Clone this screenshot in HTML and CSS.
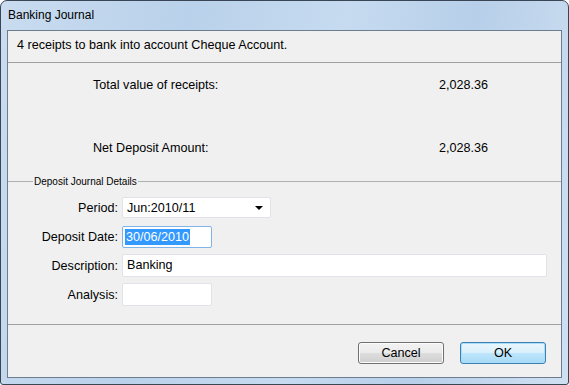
FILE: index.html
```html
<!DOCTYPE html>
<html lang="en">
<head>
    <meta charset="UTF-8">
    <title>Banking Journal</title>
    <link rel="stylesheet" href="styles.css">
</head>
<body>
    <div class="window">
        <div class="titlebar">Banking Journal</div>
        <div class="client">
            <div class="message">4 receipts to bank into account Cheque Account.</div>
            <div class="summary">
                <div class="sum-row">
                    <span class="sum-label">Total value of receipts:</span>
                    <span class="sum-value">2,028.36</span>
                </div>
                <div class="sum-row">
                    <span class="sum-label">Net Deposit Amount:</span>
                    <span class="sum-value">2,028.36</span>
                </div>
            </div>
            <div class="group-title"><span>Deposit Journal Details</span></div>
            <div class="form">
                <label>Period:</label>
                <div class="combo">Jun:2010/11<span class="arrow"></span></div>
                <label>Deposit Date:</label>
                <div class="field short focused"><span class="selected">30/06/2010</span></div>
                <label>Description:</label>
                <div class="field wide tall">Banking</div>
                <label>Analysis:</label>
                <div class="field short tall"></div>
            </div>
            <div class="buttons">
                <button type="button" class="btn">Cancel</button>
                <button type="button" class="btn default">OK</button>
            </div>
        </div>
    </div>
</body>
</html>
```

FILE: styles.css
```css
body {
    margin: 0;
    font-family: 'Liberation Sans', Arial, sans-serif;
    font-size: 12.6px;
    color: #000;
    background: #fff;
}
.window {
    width: 569px;
    height: 385px;
    box-sizing: border-box;
    border: 1px solid #3a4656;
    border-radius: 7px 7px 3px 3px;
    background: linear-gradient(100deg, #c9dcf0 0%, #b9d1ea 30%, #c6dbf0 55%, #b7cfe9 75%, #cfe0f2 100%);
    padding: 0 6px 6px 6px;
    display: flex;
    flex-direction: column;
}
.titlebar {
    height: 29px;
    line-height: 29px;
    padding-left: 1px;
    font-size: 12px;
    color: #000;
}
.client {
    flex: 1;
    background: #f0f0f0;
    border: 1px solid #6d7c8f;
    display: flex;
    flex-direction: column;
}
.message {
    height: 31px;
    line-height: 29px;
    padding-left: 9px;
    border-bottom: 1px solid #a0a0a0;
}
.summary {
    padding: 15px 0 0 85px;
    height: 111px;
    box-sizing: border-box;
    display: flex;
    flex-direction: column;
    gap: 49px;
}
.sum-row {
    display: flex;
    width: 395px;
    justify-content: space-between;
    line-height: 14px;
}
.group-title {
    display: flex;
    align-items: center;
    height: 14px;
}
.group-title::before {
    content: '';
    width: 25px;
    border-top: 1px solid #b0b0b0;
}
.group-title::after {
    content: '';
    flex: 1;
    border-top: 1px solid #b0b0b0;
}
.group-title span {
    padding: 0 1px;
    font-size: 10px;
}
.form {
    display: grid;
    grid-template-columns: 110px auto;
    grid-template-rows: repeat(4, 29px);
    align-content: start;
    column-gap: 4px;
    align-items: center;
    justify-items: start;
    padding: 5px 0 15px;
    border-bottom: 1px solid #a0a0a0;
}
.form label {
    justify-self: end;
}
.field, .combo {
    box-sizing: border-box;
    height: 22px;
    background: #fff;
    border: 1px solid #e2e3ea;
    border-radius: 2px;
    padding-left: 4px;
    line-height: 20px;
}
.combo {
    width: 149px;
    height: 21px;
    position: relative;
}
.arrow {
    position: absolute;
    right: 7px;
    top: 8px;
    border-left: 4px solid transparent;
    border-right: 4px solid transparent;
    border-top: 4px solid #000;
}
.short {
    width: 90px;
}
.wide {
    width: 425px;
}
.tall {
    height: 23px;
    line-height: 21px;
}
.focused {
    border-color: #7eb4ea;
    padding-left: 2px;
}
.selected {
    background: #3399ff;
    color: #fff;
    padding: 1px 1px;
}
.buttons {
    flex: 1;
    display: flex;
    justify-content: flex-end;
    align-items: flex-start;
    gap: 16px;
    padding: 17px 15px 0 0;
}
.btn {
    width: 86px;
    height: 22px;
    font-family: inherit;
    font-size: 12.6px;
    border: 1px solid #707070;
    border-radius: 3px;
    background: linear-gradient(#f2f2f2 0%, #ebebeb 50%, #dddddd 51%, #cfcfcf 100%);
    box-shadow: inset 0 0 0 1px #fcfcfc;
    padding: 0;
}
.btn.default {
    border-color: #3c7fb1;
    background: linear-gradient(#eaf6fd 0%, #d9f0fc 50%, #bee6fd 51%, #a7d9f5 100%);
    box-shadow: inset 0 0 0 1px #a9ddf9;
}
```
